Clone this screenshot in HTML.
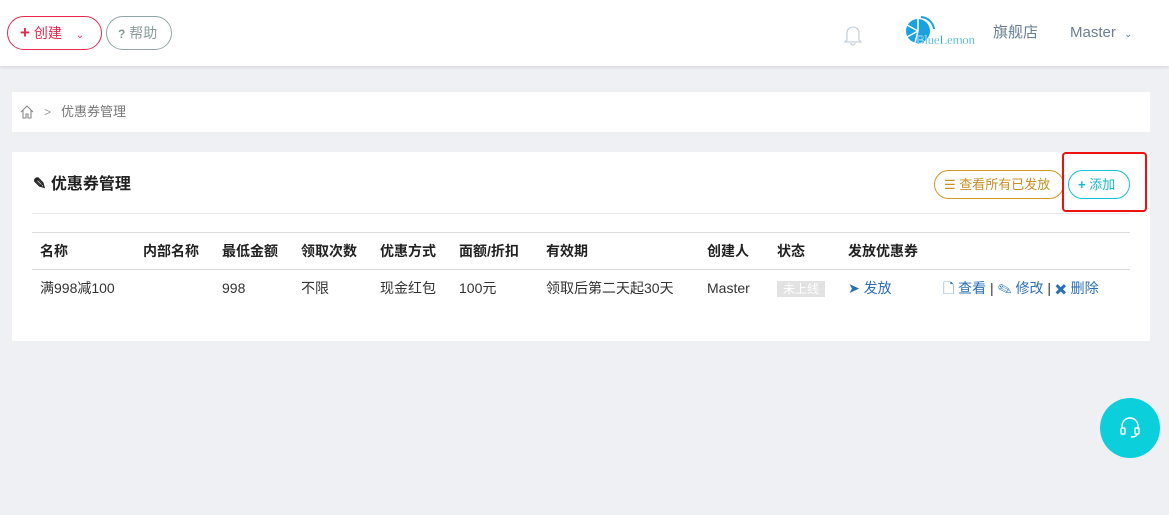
<!DOCTYPE html>
<html><head><meta charset="utf-8"><style>
*{margin:0;padding:0;box-sizing:border-box}
body{width:1169px;height:515px;background:#eef0f4;font-family:"Liberation Sans","Noto Sans CJK SC",sans-serif;font-size:14px;color:#333;position:relative;overflow:hidden}
.hdr{position:absolute;left:0;top:0;width:1169px;height:66px;background:#fff;box-shadow:0 1px 4px rgba(0,0,0,.12)}
.btn{position:absolute;border-radius:17px;height:34px;line-height:32px;font-size:14px;padding:0 12px;white-space:nowrap}
.a{position:absolute;white-space:nowrap}
.panel{position:absolute;left:12px;background:#fff;width:1138px}
.th{font-weight:bold;position:absolute;top:241px;line-height:20px;font-size:14px;color:#222}
.td{position:absolute;top:278px;line-height:20px;font-size:14px;color:#333;white-space:nowrap}
.line{position:absolute;left:32px;width:1098px;height:1px;background:#ddd}
.blue{color:#2a6fb5}
</style></head><body>
<div class="hdr">
<div class="btn" style="left:7px;top:16px;width:95px;border:1px solid #e8294e;color:#e8294e"><b style="font-size:17px">+</b> 创建 <span style="font-size:10px;margin-left:10px">&#8964;</span></div>
<div class="btn" style="left:106px;top:16px;width:66px;border:1px solid #93a5a5;color:#8a9b9b;padding:0 11px"><b style="font-size:12px">?</b> 帮助</div>
<svg class="a" style="left:843px;top:24px" width="20" height="22" viewBox="0 0 20 22" fill="none" stroke="#c8d2dc" stroke-width="1.3"><path d="M4 16V9a6 6 0 0 1 12 0v7l2 2H2z"/><path d="M8 19a2 2 0 0 0 4 0"/></svg>
<svg class="a" style="left:903px;top:16px" width="36" height="32" viewBox="0 0 36 32"><circle cx="15" cy="15" r="12" fill="#1aa1e0"/><path d="M18 1a14 14 0 0 1 13 12" stroke="#1aa1e0" stroke-width="2" fill="none"/><g stroke="#fff" stroke-width="1.5"><line x1="15" y1="15" x2="15" y2="3"/><line x1="15" y1="15" x2="4" y2="9"/><line x1="15" y1="15" x2="4" y2="21"/><line x1="15" y1="15" x2="12" y2="27"/></g></svg>
<div class="a" style="left:916px;top:32px;font-family:'Liberation Serif',serif;font-size:13px;color:#1aa1e0;letter-spacing:-0.3px;-webkit-text-stroke:0.3px #fff">BlueLemon</div>
<div class="a" style="left:993px;top:23px;color:#6a7f96;font-size:15px;line-height:20px">旗舰店</div>
<div class="a" style="left:1070px;top:23px;color:#6a7f96;font-size:15px;line-height:20px">Master <span style="font-size:10px;margin-left:4px">&#8964;</span></div>
</div>
<div class="panel" style="top:92px;height:40px">
<svg class="a" style="left:8px;top:13px" width="14" height="14" viewBox="0 0 14 14" fill="none" stroke="#888" stroke-width="1.1"><path d="M1 7L7 1l6 6M3 5.5V13h3V9h2v4h3V5.5"/></svg>
<div class="a" style="left:32px;top:12px;color:#999;font-size:12px;line-height:16px">&gt;</div>
<div class="a" style="left:49px;top:11px;color:#777;font-size:13px;line-height:18px">优惠券管理</div>
</div>
<div class="panel" style="top:152px;height:189px"></div>
<div class="a" style="left:33px;top:174px;font-weight:bold;font-size:16px;line-height:22px;color:#222">&#9998; 优惠券管理</div>
<div class="btn" style="left:934px;top:170px;width:130px;height:29px;line-height:27px;border:1px solid #d09a2a;color:#c79027;padding:0 9px;font-size:13px">&#9776; 查看所有已发放</div>
<div class="btn" style="left:1068px;top:170px;width:62px;height:29px;line-height:27px;border:1px solid #17c3d5;color:#17b8cc;padding:0 9px;font-size:13px"><b>+</b> 添加</div>
<div class="a" style="left:1062px;top:152px;width:85px;height:60px;border:2px solid #ee1111;border-radius:4px"></div>
<div class="line" style="top:213px;background:#e8e8e8"></div>
<div class="line" style="top:232px"></div>
<div class="line" style="top:269px"></div>
<div class="th" style="left:40px">名称</div><div class="th" style="left:143px">内部名称</div><div class="th" style="left:222px">最低金额</div><div class="th" style="left:301px">领取次数</div><div class="th" style="left:380px">优惠方式</div><div class="th" style="left:459px">面额/折扣</div><div class="th" style="left:546px">有效期</div><div class="th" style="left:707px">创建人</div><div class="th" style="left:777px">状态</div><div class="th" style="left:848px">发放优惠券</div>
<div class="td" style="left:40px">满998减100</div><div class="td" style="left:222px">998</div><div class="td" style="left:301px">不限</div><div class="td" style="left:380px">现金红包</div><div class="td" style="left:459px">100元</div><div class="td" style="left:546px">领取后第二天起30天</div><div class="td" style="left:707px">Master</div>
<div class="a" style="left:777px;top:281px;width:48px;height:16px;background:#e2e2e2;color:#fff;font-size:12px;line-height:16px;text-align:center">未上线</div>
<div class="td blue" style="left:848px">&#10148; 发放</div>
<div class="td blue" style="left:943px">&#128459; 查看 <span style="color:#333">|</span> &#9998; 修改 <span style="color:#333">|</span> &#10006; 删除</div>
<div class="a" style="left:1100px;top:398px;width:60px;height:60px;border-radius:50%;background:#0ccfdc"></div>
<svg class="a" style="left:1118px;top:415px" width="24" height="26" viewBox="0 0 24 26" fill="none" stroke="#fff" stroke-width="1.4"><path d="M4 14V11a8 8 0 0 1 16 0v3"/><rect x="3" y="13" width="4" height="6" rx="1"/><rect x="17" y="13" width="4" height="6" rx="1"/><path d="M19 19q0 3-6 3"/></svg>
</body></html>
